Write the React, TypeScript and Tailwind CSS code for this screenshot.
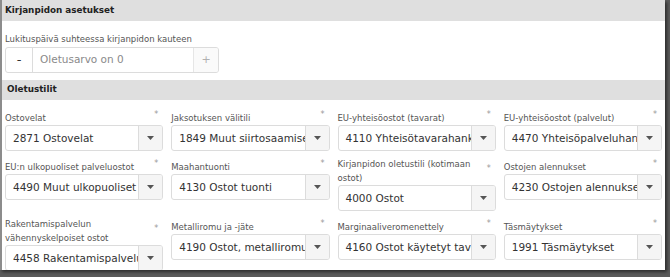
import React from "react";

const FONT = { fontFamily: '"DejaVu Sans", "Open Sans", sans-serif' };

type Field = { label: string[]; value: string };

const rows: Field[][] = [
  [
    { label: ["Ostovelat"], value: "2871 Ostovelat" },
    { label: ["Jaksotuksen välitili"], value: "1849 Muut siirtosaamiset" },
    { label: ["EU-yhteisöostot (tavarat)"], value: "4110 Yhteisötavarahankinnat" },
    { label: ["EU-yhteisöostot (palvelut)"], value: "4470 Yhteisöpalveluhankinnat" },
  ],
  [
    { label: ["EU:n ulkopuoliset palveluostot"], value: "4490 Muut ulkopuoliset palvelut" },
    { label: ["Maahantuonti"], value: "4130 Ostot tuonti" },
    { label: ["Kirjanpidon oletustili (kotimaan", "ostot)"], value: "4000 Ostot" },
    { label: ["Ostojen alennukset"], value: "4230 Ostojen alennukset" },
  ],
  [
    { label: ["Rakentamispalvelun", "vähennyskelpoiset ostot"], value: "4458 Rakentamispalvelut" },
    { label: ["Metalliromu ja -jäte"], value: "4190 Ostot, metalliromu ja -jäte" },
    { label: ["Marginaaliveromenettely"], value: "4160 Ostot käytetyt tavarat" },
    { label: ["Täsmäytykset"], value: "1991 Täsmäytykset" },
  ],
];

function Caret() {
  return (
    <svg width="7" height="4" viewBox="0 0 7 4">
      <path d="M0 0 L7 0 L3.5 4 Z" fill="#555" />
    </svg>
  );
}

function SelectField({ f }: { f: Field }) {
  return (
    <div className="flex flex-col min-w-0">
      <div className="flex items-end justify-between min-h-[17px]">
        <div className="text-[8.5px] leading-[14px] text-[#555] whitespace-nowrap">
          {f.label.map((l, i) => (
            <div key={i}>{l}</div>
          ))}
        </div>
        <span className="self-center text-[8px] leading-[10px] text-[#999] mr-[5px] -mt-[4px]">*</span>
      </div>
      <div className="flex h-[26px] border border-[#dcdcdc] rounded-[3px] overflow-hidden bg-white">
        <div className="flex-1 min-w-0 overflow-hidden whitespace-nowrap text-[10.5px] leading-[24px] text-[#333] pl-[7px]">
          {f.value}
        </div>
        <div className="w-[24px] shrink-0 flex items-center justify-center border-l border-[#dcdcdc] bg-[#f5f5f5]">
          <Caret />
        </div>
      </div>
    </div>
  );
}

export default function App() {
  return (
    <div className="w-[670px] h-[277px] bg-[#5a5a5a] overflow-hidden" style={FONT}>
      <div className="w-[665px] h-[270px] bg-white border-l-2 border-[#8c8c8c] shadow-[2px_2px_3px_rgba(0,0,0,0.5)] overflow-hidden">
        <div className="h-[21px] bg-[#dfdfdf] flex items-center pl-[3px]">
          <span className="text-[8.8px] font-bold text-[#222]">Kirjanpidon asetukset</span>
        </div>
        <div className="px-[3px] pt-[11px]">
          <div className="text-[8.5px] leading-[14px] text-[#555]">Lukituspäivä suhteessa kirjanpidon kauteen</div>
          <div className="mt-[1px] flex w-[214px] h-[26px] border border-[#dcdcdc] rounded-[3px] overflow-hidden">
            <div className="w-[27px] flex items-center justify-center border-r border-[#dcdcdc] text-[13px] text-[#333]">-</div>
            <div className="flex-1 flex items-center pl-[7px] text-[10.5px] text-[#8a8a8a]">Oletusarvo on 0</div>
            <div className="w-[25px] flex items-center justify-center border-l border-[#e6e6e6] bg-[#fafafa] text-[11px] text-[#b0b0b0]">+</div>
          </div>
        </div>
        <div className="mt-[7px] h-[20px] bg-[#dfdfdf] flex items-center pl-[5px]">
          <span className="text-[8.8px] font-bold text-[#222]">Oletustilit</span>
        </div>
        <div className="px-[3px] pt-[8px] grid grid-cols-4 gap-x-[8px] gap-y-[6px] items-start">
          {rows.flat().map((f, i) => (
            <SelectField key={i} f={f} />
          ))}
        </div>
      </div>
    </div>
  );
}
